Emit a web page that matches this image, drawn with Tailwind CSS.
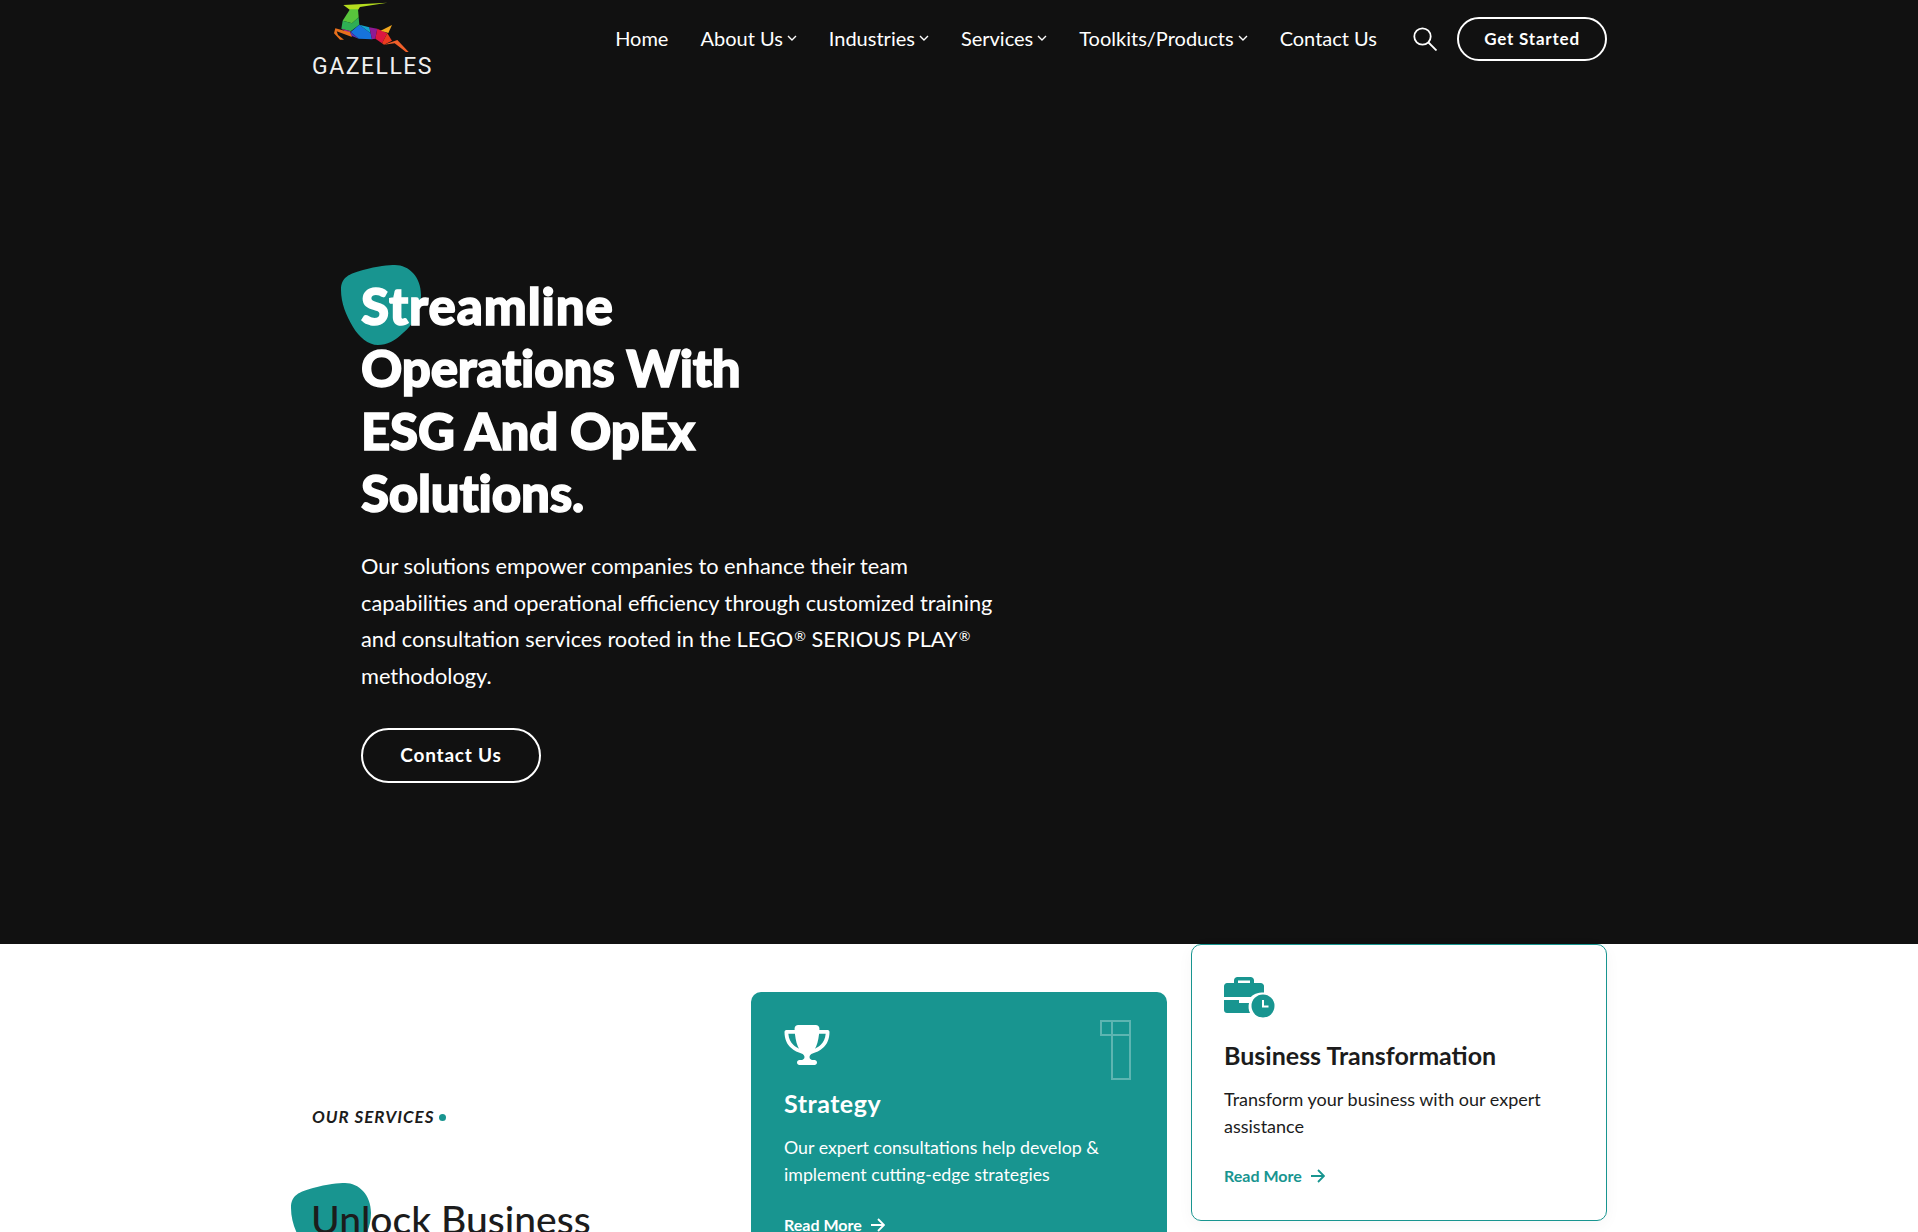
<!DOCTYPE html>
<html lang="en">
<head>
  <meta charset="UTF-8" />
  <meta name="viewport" content="width=device-width, initial-scale=1" />
  <title>Gazelles</title>
  <script src="https://cdn.jsdelivr.net/npm/@tailwindcss/browser@4"></script>
</head>
<body class="bg-white h-[1232px] overflow-hidden font-['Lato',sans-serif]">
  <!-- Hero -->
  <section class="bg-[#111111] h-[944px] text-white">
    <div class="w-[1298px] mx-auto">
      <!-- Nav -->
      <header class="flex items-start justify-between h-[78px]">
        <a class="block w-[124px]">
          <svg class="ml-[-10px] block" width="140" height="56" viewBox="0 0 420 168">
            <polygon points="130,15 262,8 180,21 174,30 150,30" fill="#b4dc1e"/>
            <polygon points="150,28 174,28 176,52 156,70 128,62" fill="#58c43c"/>
            <polygon points="128,62 156,70 176,52 178,74 152,94 124,86" fill="#2fae54"/>
            <polygon points="178,74 212,100 216,118 176,116 152,96" fill="#1673dc"/>
            <polygon points="178,74 208,82 212,100" fill="#12a4cc"/>
            <polygon points="124,86 152,94 150,104" fill="#a62a92"/>
            <polygon points="152,96 176,116 150,106" fill="#5b37b8"/>
            <polygon points="208,82 232,86 226,116 216,118" fill="#8e1a94"/>
            <polygon points="232,86 262,100 246,130 226,116" fill="#dc1640"/>
            <polygon points="242,92 276,75 265,99" fill="#f2a81e"/>
            <polygon points="246,130 262,100 276,122 252,134" fill="#ec3a1e"/>
            <polygon points="252,134 292,120 326,156 318,156 284,130" fill="#f2602a"/>
            <polygon points="150,97 106,85 102,100 120,119 132,119 114,105 110,94 156,111" fill="#e8701c"/>
          </svg>
          <span class="block ml-[2px] mt-[-1px] text-[23px] leading-[24px] tracking-[1.5px] font-['Roboto',sans-serif] font-normal text-[#f0f0f0]">GAZELLES</span>
        </a>
        <nav class="flex items-center h-[78px] mr-[1px]">
          <div class="flex items-center gap-8 text-[20px] mb-[2px]">
            <a>Home</a>
            <a class="flex items-center gap-1">About Us
              <svg width="10" height="6" viewBox="0 0 10 6" fill="none" stroke="white" stroke-width="1.4"><path d="M1 1l4 4 4-4"/></svg></a>
            <a class="flex items-center gap-1">Industries
              <svg width="10" height="6" viewBox="0 0 10 6" fill="none" stroke="white" stroke-width="1.4"><path d="M1 1l4 4 4-4"/></svg></a>
            <a class="flex items-center gap-1">Services
              <svg width="10" height="6" viewBox="0 0 10 6" fill="none" stroke="white" stroke-width="1.4"><path d="M1 1l4 4 4-4"/></svg></a>
            <a class="flex items-center gap-1">Toolkits/Products
              <svg width="10" height="6" viewBox="0 0 10 6" fill="none" stroke="white" stroke-width="1.4"><path d="M1 1l4 4 4-4"/></svg></a>
            <a>Contact Us</a>
          </div>
          <svg class="ml-9" width="24" height="24" viewBox="0 0 24 24" fill="none" stroke="white" stroke-width="1.8"><circle cx="9.500" cy="9.500" r="8.200"/><path d="M15.500 15.500L23.500 23.500"/></svg>
          <a class="ml-5 flex items-center justify-center w-[150px] h-[44px] border-2 border-white rounded-full text-[17px] font-bold tracking-[0.8px]">Get Started</a>
        </nav>
      </header>

      <!-- Hero copy -->
      <div class="pl-[51px] pt-[197px]">
        <h1 class="relative w-[460px] text-[51px] leading-[62.3px] font-black tracking-[-0.2px] [-webkit-text-stroke:1.5px_white]">
          <svg class="absolute left-[-20px] top-[-10px]" width="80" height="80" viewBox="0 0 80 80" fill="#189590"><path d="M0 25C0 12 8 9 22 5C36 1 48 0 54 0C68 0 80 12 80 30C80 46 72 60 62 68C54 76 46 80 37 80C27 80 18 72 12 62C5 50 0 38 0 25Z"/></svg>
          <span class="relative"><span class="tracking-[0.9px]">Streamline</span><br />Operations With<br />ESG And OpEx<br />Solutions.</span>
        </h1>
        <p class="w-[640px] mt-[24px] text-[21.8px] leading-[36.6px] font-normal">Our solutions empower companies to enhance their team capabilities and operational efficiency through customized training and consultation services rooted in the LEGO<span class="text-[14px] leading-[0] align-[6px] ml-[1px]">®</span> SERIOUS PLAY<span class="text-[14px] leading-[0] align-[6px] ml-[1px]">®</span> methodology.</p>
        <a class="mt-[33px] flex items-center justify-center w-[180px] h-[55px] border-2 border-white rounded-full text-[19px] font-bold tracking-[0.8px]">Contact Us</a>
      </div>
    </div>
  </section>

  <!-- Services -->
  <section class="w-[1298px] mx-auto flex items-start">
    <div class="w-[441px] pl-[2px] pt-[163px]">
      <p class="flex items-center gap-[5px] text-[17px] leading-[20px] italic font-bold tracking-[1px] text-[#1c1c1c]">OUR SERVICES <span class="w-[7px] h-[7px] rounded-full bg-[#189590]"></span></p>
      <h2 class="relative mt-[66px] text-[39px] leading-[52px] font-medium text-[#1c1c1c]">
        <svg class="absolute left-[-21px] top-[-10px]" width="80" height="80" viewBox="0 0 80 80" fill="#189590"><path d="M0 25C0 12 8 9 22 5C36 1 48 0 54 0C68 0 80 12 80 30C80 46 72 60 62 68C54 76 46 80 37 80C27 80 18 72 12 62C5 50 0 38 0 25Z"/></svg>
        <span class="relative whitespace-nowrap ml-[-1px]">Unlock Business</span>
      </h2>
    </div>

    <div class="relative mt-[48px] w-[416px] h-[300px] shrink-0 bg-[#189590] rounded-[10px] px-[33px] pt-[33px] text-white">
      <svg class="absolute right-[36px] top-[28px]" width="31" height="60" viewBox="0 0 31 60" fill="none" stroke="white" stroke-opacity="0.3" stroke-width="2"><path d="M1 1h29v14H1zM12 1v58h18V15"/></svg>
      <svg class="block" width="46" height="40" viewBox="0 0 576 512" fill="white"><path d="M400 0H176c-26.5 0-48.1 21.8-47.1 48.2c.2 5.3 .4 10.6 .7 15.8H24C10.7 64 0 74.7 0 88c0 92.6 33.5 157 78.5 200.7c44.3 43.1 98.3 64.8 138.1 75.8c23.4 6.5 39.4 26 39.4 45.6c0 20.9-17 37.9-37.9 37.9H192c-17.7 0-32 14.3-32 32s14.3 32 32 32H384c17.7 0 32-14.3 32-32s-14.3-32-32-32H357.9C337 448 320 431 320 410.1c0-19.6 15.9-39.2 39.4-45.6c39.9-11 93.9-32.7 138.2-75.8C542.5 245 576 180.6 576 88c0-13.3-10.7-24-24-24H446.4c.3-5.2 .5-10.4 .7-15.8C448.1 21.8 426.5 0 400 0zM48.9 112h84.4c9.1 90.1 29.2 150.3 51.9 190.6c-24.9-11-50.8-26.5-73.2-48.3c-32-31.1-58-76-63-142.3zM464.1 254.3c-22.4 21.8-48.3 37.3-73.2 48.3c22.7-40.3 42.8-100.5 51.9-190.6h84.4c-5.1 66.3-31.1 111.2-63 142.3z"/></svg>
      <h3 class="mt-[22px] text-[25px] leading-[32px] font-bold tracking-[0.5px]">Strategy</h3>
      <p class="mt-[15px] text-[17.8px] leading-[27px]">Our expert consultations help develop &amp; implement cutting-edge strategies</p>
      <a class="mt-[25px] flex items-center gap-2 text-[16px] font-bold">Read More
        <svg width="15" height="14" viewBox="0 0 15 14" fill="none" stroke="white" stroke-width="1.8"><path d="M1 7h13M8 1l6 6-6 6"/></svg></a>
    </div>

    <div class="ml-[24px] w-[416px] h-[277px] shrink-0 bg-white border border-[#189590] rounded-[10px] px-[32px] pt-[32px] shadow-[0_4px_16px_rgba(0,0,0,0.04)]">
      <svg class="block" width="51" height="41" viewBox="0 0 51 41" fill="#189590">
        <path fill-rule="evenodd" d="M10 6V3.500C10 1.500 11.500 0 13.500 0h13C28.500 0 30 1.500 30 3.500V6h6.500C39 6 40 8 40 9v6.500C33 15.500 29 17.500 27 20H0V9c0-1.500 1.500-3 3-3zM14 6h12V3.500H14z"/>
        <path d="M0 23h15v3h10c-.8 3.500-.5 7 1 10H3c-1.500 0-3-1.300-3-3z"/>
        <circle cx="39" cy="29" r="11.500"/>
        <path d="M39 23v6.500h5.500" fill="none" stroke="white" stroke-width="2"/>
      </svg>
      <h3 class="mt-[21px] text-[25px] leading-[32px] font-bold text-[#1c1c1c]">Business Transformation</h3>
      <p class="mt-[15px] text-[18px] leading-[27px] text-[#1c1c1c]">Transform your business with our expert assistance</p>
      <a class="mt-[24px] flex items-center gap-2 text-[16px] font-bold text-[#189590]">Read More
        <svg width="15" height="14" viewBox="0 0 15 14" fill="none" stroke="#189590" stroke-width="1.8"><path d="M1 7h13M8 1l6 6-6 6"/></svg></a>
    </div>
  </section>
</body>
</html>
